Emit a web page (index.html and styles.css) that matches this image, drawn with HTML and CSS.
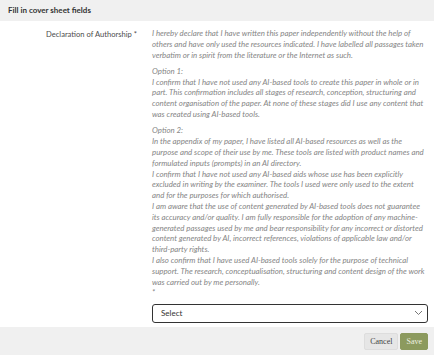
FILE: index.html
```html
<!DOCTYPE html>
<html>
<head>
    <meta charset="UTF-8">
    <title>Fill in cover sheet fields</title>
    <link rel="stylesheet" href="styles.css">
</head>
<body>
    <div class="dialog">
        <div class="dialog-header">Fill in cover sheet fields</div>

        <div class="dialog-body">
            <div class="field">
                <div class="field-label">Declaration of Authorship *</div>
                <div class="field-value">
                    <p>I hereby declare that I have written this paper independently without the help of<br>
                    others and have only used the resources indicated. I have labelled all passages taken<br>
                    verbatim or in spirit from the literature or the Internet as such.</p>
                    <p>Option 1:<br>
                    I confirm that I have not used any AI-based tools to create this paper in whole or in<br>
                    part. This confirmation includes all stages of research, conception, structuring and<br>
                    content organisation of the paper. At none of these stages did I use any content that<br>
                    was created using AI-based tools.</p>
                    <p>Option 2:<br>
                    In the appendix of my paper, I have listed all AI-based resources as well as the<br>
                    purpose and scope of their use by me. These tools are listed with product names and<br>
                    formulated inputs (prompts) in an AI directory.<br>
                    I confirm that I have not used any AI-based aids whose use has been explicitly<br>
                    excluded in writing by the examiner. The tools I used were only used to the extent<br>
                    and for the purposes for which authorised.<br>
                    I am aware that the use of content generated by AI-based tools does not guarantee<br>
                    its accuracy and/or quality. I am fully responsible for the adoption of any machine-<br>generated passages used by me and bear responsibility for any incorrect or distorted<br>
                    content generated by AI, incorrect references, violations of applicable law and/or<br>
                    third-party rights.<br>
                    I also confirm that I have used AI-based tools solely for the purpose of technical<br>
                    support. The research, conceptualisation, structuring and content design of the work<br>
                    was carried out by me personally.<br>
                    *</p>

                    <div class="select-box">
                        <span>Select</span>
                        <svg class="chevron" width="9" height="6" viewBox="0 0 9 6">
                            <path d="M1 1l3.5 3.5L8 1" fill="none" stroke="#777" stroke-width="1"/>
                        </svg>
                    </div>
                </div>
            </div>
        </div>

        <div class="dialog-footer">
            <button class="btn cancel-btn">Cancel</button>
            <button class="btn save-btn">Save</button>
        </div>
    </div>
</body>
</html>
```

FILE: styles.css
```css
body {
    margin: 0;
    background: #fff;
    font-family: "Lato", "Liberation Sans", sans-serif;
}
.dialog {
    width: 434px;
    height: 355px;
    display: flex;
    flex-direction: column;
}
.dialog-header {
    height: 21px;
    line-height: 21px;
    padding: 0 8px;
    background: #f0f0f0;
    font-size: 8px;
    font-weight: bold;
    color: #333;
}
.dialog-body {
    flex: 1;
    padding: 7px 3px 0 0;
}
.field {
    display: flex;
}
.field-label {
    width: 137px;
    text-align: right;
    font-size: 7.6px;
    line-height: 10.8px;
    color: #4d4d4d;
    padding-top: 1px;
}
.field-value {
    flex: 1;
    margin-left: 15px;
}
.field-value p {
    margin: 0 0 5.5px;
    font-size: 7.85px;
    line-height: 10.8px;
    font-style: italic;
    color: #858585;
    white-space: nowrap;
}
.select-box {
    margin: 5px 3px 0 0;
    height: 17px;
    border: 1px solid #333;
    border-radius: 3px;
    display: flex;
    align-items: center;
    justify-content: space-between;
    padding: 0 4px 0 8px;
    font-size: 8px;
    color: #333;
}
.dialog-footer {
    height: 28px;
    background: #f0f0f0;
    display: flex;
    justify-content: flex-end;
    align-items: center;
    gap: 2px;
    padding-right: 6px;
}
.btn {
    height: 17px;
    padding: 0 5px;
    font-family: "Liberation Serif", serif;
    font-size: 8px;
    border-radius: 2px;
    border: 1px solid #ddd;
    cursor: pointer;
}
.cancel-btn {
    background: #e6e6e6;
    color: #444;
}
.save-btn {
    background: #8c9a5e;
    border-color: #8c9a5e;
    color: #eef0e0;
}
```
